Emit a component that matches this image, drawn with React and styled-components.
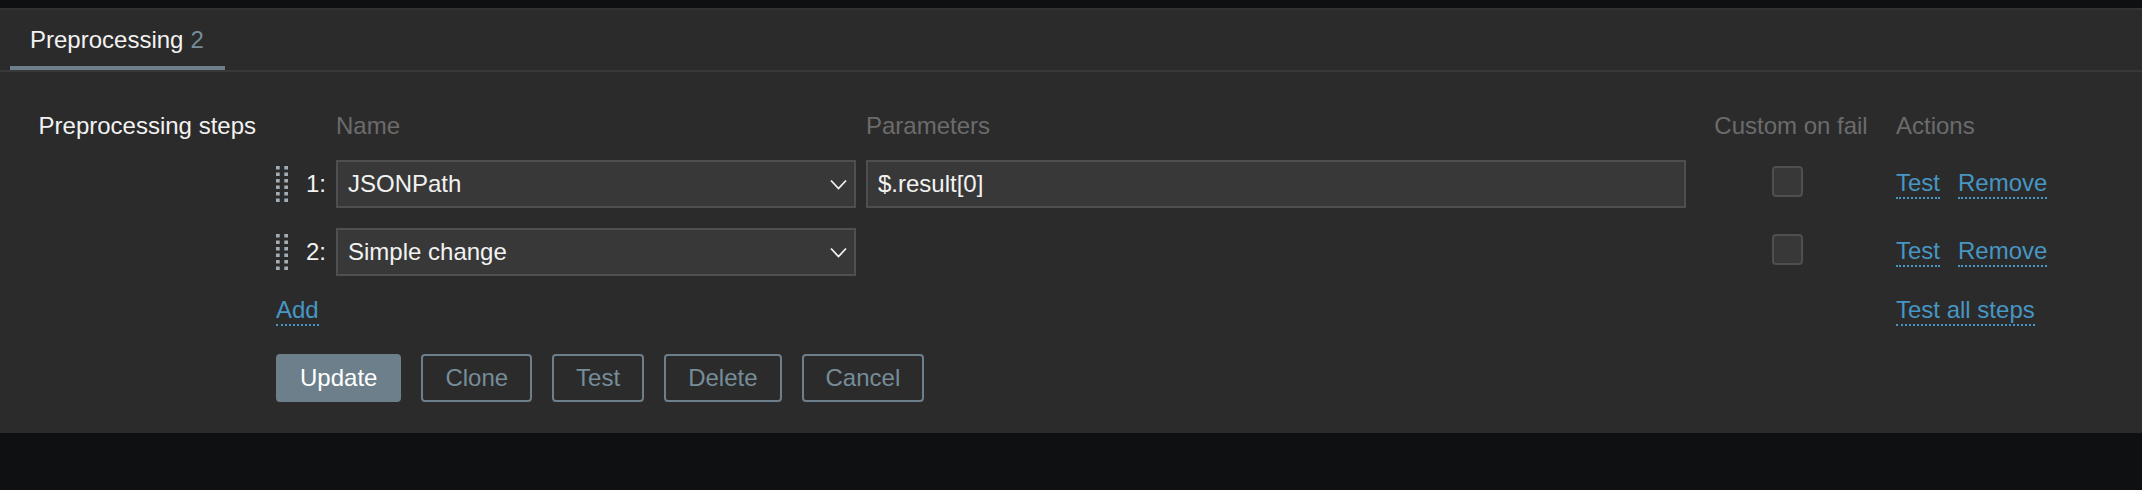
import React from "react";
import styled, { createGlobalStyle } from "styled-components";

const GlobalStyle = createGlobalStyle`
  html, body {
    margin: 0;
    padding: 0;
    background: #0f1012;
  }
  body {
    font-family: "Liberation Sans", Arial, Helvetica, sans-serif;
    font-size: 24px;
    color: #f2f2f2;
  }
  * { box-sizing: border-box; }
`;

const Page = styled.div`
  padding-top: 8px;
`;

const Panel = styled.section`
  background: #2b2b2b;
  border-top: 2px solid #333333;
  padding-bottom: 31px;
`;

const TabBar = styled.nav`
  display: flex;
  padding-left: 10px;
  border-bottom: 2px solid #383838;
`;

const Tab = styled.div`
  display: flex;
  align-items: center;
  height: 60px;
  padding: 4px 21px 0 20px;
  line-height: 28px;
  color: #f2f2f2;
  border-bottom: 4px solid ${(p) => (p.$active ? "#6d7f8b" : "transparent")};
`;

const Count = styled.span`
  color: #768d99;
  margin-left: 7px;
`;

const FormRow = styled.div`
  display: grid;
  grid-template-columns: 276px 1fr;
  padding-top: 40px;
`;

const FieldLabel = styled.label`
  text-align: right;
  padding-right: 20px;
  line-height: 28px;
  color: #f2f2f2;
`;

const FieldBody = styled.div`
  display: flex;
  flex-direction: column;
`;

const StepsTable = styled.div`
  display: grid;
  grid-template-columns: 12px 28px 520px 820px 190px 1fr;
  column-gap: 10px;
  row-gap: 20px;
  align-items: center;
`;

const HeadCell = styled.div`
  grid-column: ${(p) => p.$col || "auto"};
  line-height: 28px;
  color: #6b6b6b;
  text-align: ${(p) => p.$align || "left"};
  white-space: nowrap;
`;

const Handle = styled.svg`
  display: block;
  width: 12px;
  height: 36px;
`;

const StepNumber = styled.div`
  text-align: right;
  line-height: 28px;
  color: #f2f2f2;
`;

const SelectBox = styled.div`
  display: flex;
  align-items: center;
  justify-content: space-between;
  height: 48px;
  padding: 0 7px 0 10px;
  background: #383838;
  border: 2px solid #4f4f4f;
  color: #f2f2f2;
  line-height: 28px;
`;

const Chevron = styled.svg`
  width: 17px;
  height: 11px;
  display: block;
`;

const TextInput = styled.input`
  height: 48px;
  width: 100%;
  padding: 0 10px;
  background: #383838;
  border: 2px solid #4f4f4f;
  border-radius: 0;
  color: #f2f2f2;
  font-family: "Liberation Sans", Arial, Helvetica, sans-serif;
  font-size: 24px;
  outline: none;
`;

const CheckCell = styled.div`
  display: flex;
  justify-content: center;
  padding-right: 8px;
`;

const Checkbox = styled.span`
  display: block;
  width: 31px;
  height: 31px;
  margin-bottom: 5px;
  background: #383838;
  border: 2px solid #4f4f4f;
  border-radius: 4px;
`;

const Actions = styled.div`
  display: flex;
  align-items: center;
  gap: 18px;
`;

const Link = styled.a`
  display: inline-block;
  color: #4796c4;
  line-height: 28px;
  text-decoration: none;
  border-bottom: 2px dotted #4796c4;
  cursor: pointer;
`;

const AddCell = styled.div`
  grid-column: 1 / 6;
  display: flex;
`;

const ButtonRow = styled.div`
  display: flex;
  gap: 20px;
  margin-top: 28px;
`;

const Button = styled.button`
  height: 48px;
  padding: 0 22px;
  border: 2px solid #6d7f8b;
  border-radius: 4px;
  background: ${(p) => (p.$primary ? "#6d7f8b" : "transparent")};
  color: ${(p) => (p.$primary ? "#ffffff" : "#768d99")};
  font-family: "Liberation Sans", Arial, Helvetica, sans-serif;
  font-size: 24px;
  line-height: 28px;
  cursor: pointer;
`;

const DragHandle = () => (
  <Handle viewBox="0 0 12 36">
    {[0, 6.5, 13, 19.5, 26, 32.5].map((y) =>
      [0, 8.3].map((x) => (
        <rect key={`${x}-${y}`} x={x} y={y} width="3.7" height="3.5" fill="#a3adb5" />
      ))
    )}
  </Handle>
);

const Select = ({ value }) => (
  <SelectBox>
    <span>{value}</span>
    <Chevron viewBox="0 0 17 11">
      <polyline points="1,1.5 8.5,9.5 16,1.5" fill="none" stroke="#f2f2f2" strokeWidth="1.8" />
    </Chevron>
  </SelectBox>
);

const steps = [
  { n: 1, name: "JSONPath", param: "$.result[0]" },
  { n: 2, name: "Simple change", param: null },
];

export default function App() {
  return (
    <Page>
      <GlobalStyle />
      <Panel>
        <TabBar>
          <Tab $active>
            Preprocessing<Count>2</Count>
          </Tab>
        </TabBar>
        <FormRow>
          <FieldLabel>Preprocessing steps</FieldLabel>
          <FieldBody>
            <StepsTable>
              <HeadCell $col="3">Name</HeadCell>
              <HeadCell>Parameters</HeadCell>
              <HeadCell $align="center">Custom on fail</HeadCell>
              <HeadCell>Actions</HeadCell>
              {steps.map((s) => (
                <React.Fragment key={s.n}>
                  <DragHandle />
                  <StepNumber>{s.n}:</StepNumber>
                  <Select value={s.name} />
                  {s.param !== null ? (
                    <TextInput defaultValue={s.param} readOnly />
                  ) : (
                    <div />
                  )}
                  <CheckCell>
                    <Checkbox />
                  </CheckCell>
                  <Actions>
                    <Link>Test</Link>
                    <Link>Remove</Link>
                  </Actions>
                </React.Fragment>
              ))}
              <AddCell>
                <Link>Add</Link>
              </AddCell>
              <Actions>
                <Link>Test all steps</Link>
              </Actions>
            </StepsTable>
            <ButtonRow>
              <Button $primary>Update</Button>
              <Button>Clone</Button>
              <Button>Test</Button>
              <Button>Delete</Button>
              <Button>Cancel</Button>
            </ButtonRow>
          </FieldBody>
        </FormRow>
      </Panel>
    </Page>
  );
}
